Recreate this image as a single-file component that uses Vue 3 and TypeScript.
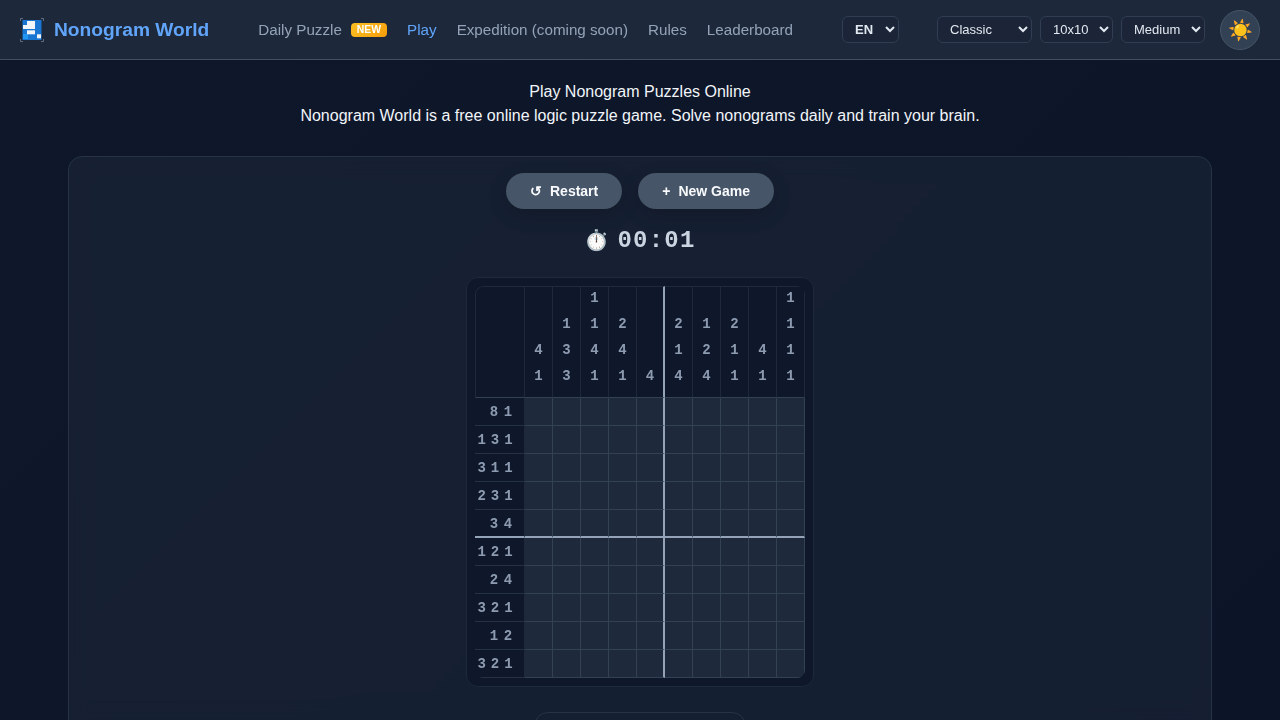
<script setup lang="ts">
const navLinks = [
  { label: 'Daily Puzzle', badge: 'NEW' },
  { label: 'Play', active: true },
  { label: 'Expedition (coming soon)' },
  { label: 'Rules' },
  { label: 'Leaderboard' },
]

// column and row hints of the current puzzle
const colClues: number[][] = [
  [4, 1], [1, 3, 3], [1, 1, 4, 1], [2, 4, 1], [4],
  [2, 1, 4], [1, 2, 4], [2, 1, 1], [4, 1], [1, 1, 1, 1],
]
const rowClues: number[][] = [
  [8, 1], [1, 3, 1], [3, 1, 1], [2, 3, 1], [3, 4],
  [1, 2, 1], [2, 4], [3, 2, 1], [1, 2], [3, 2, 1],
]
const logoCells = [
  [7, 3], [11, 3],
  [3, 7], [7, 7], [11, 7],
  [7, 12.3], [11, 12.3],
  [17, 16.3],
]
</script>

<template>
  <div class="page">
    <header class="topbar">
      <a class="brand">
        <svg class="brand-icon" viewBox="0 0 24 24" width="24" height="24">
          <rect x="2.5" y="2" width="19" height="20" fill="#1976d2" />
          <rect x="3" y="16" width="5" height="5" fill="#2196f3" />
          <rect v-for="(c, i) in logoCells" :key="i" :x="c[0]" :y="c[1]" width="4" height="4" fill="#f1f5f9" />
          <path d="M0.5 3V0.5H3M21 0.5H23.5V3M23.5 21V23.5H21M3 23.5H0.5V21" fill="none" stroke="#7c8aa0" stroke-width="0.7" />
        </svg>
        <span>Nonogram World</span>
      </a>
      <nav class="nav">
        <a v-for="l in navLinks" :key="l.label" class="nav-link" :class="{ active: l.active }">
          {{ l.label }}<span v-if="l.badge" class="badge">{{ l.badge }}</span>
        </a>
      </nav>
      <select class="sel sel-lang"><option>EN</option><option>ZH</option></select>
      <div class="controls">
        <select class="sel sel-mode"><option>Classic</option><option>Color</option></select>
        <select class="sel sel-size"><option>10x10</option><option>15x15</option></select>
        <select class="sel sel-level"><option>Medium</option><option>Easy</option><option>Hard</option></select>
      </div>
      <button class="theme-btn">☀️</button>
    </header>

    <main class="main">
      <section class="intro">
        <h1>Play Nonogram Puzzles Online</h1>
        <p>Nonogram World is a free online logic puzzle game. Solve nonograms daily and train your brain.</p>
      </section>

      <section class="card">
        <div class="actions">
          <button class="btn"><span>↺</span>Restart</button>
          <button class="btn"><span>+</span>New Game</button>
        </div>
        <div class="timer"><span class="watch">⏱️</span><span class="time">00:01</span></div>

        <div class="board">
          <div class="grid">
            <div class="corner"></div>
            <div
              v-for="(clue, c) in colClues"
              :key="'c' + c"
              class="col-clue"
              :class="{ thick: c === 4 }"
            >
              <span v-for="(n, k) in clue" :key="k">{{ n }}</span>
            </div>
            <template v-for="(clue, r) in rowClues" :key="'r' + r">
              <div class="row-clue" :class="{ thick: r === 4 }">
                <span v-for="(n, k) in clue" :key="k">{{ n }}</span>
              </div>
              <div
                v-for="c in 10"
                :key="c"
                class="cell"
                :class="{ 'thick-r': c === 5, 'thick-b': r === 4 }"
              ></div>
            </template>
          </div>
        </div>

        <div class="legend"></div>
      </section>
    </main>
  </div>
</template>

<style>
html, body {
  margin: 0;
  height: 720px;
  overflow: hidden;
  background: #0f172a;
}
</style>

<style scoped>
.page {
  height: 720px;
  overflow: hidden;
  font-family: "Liberation Sans", Arial, sans-serif;
  color: #e2e8f0;
  background: linear-gradient(135deg, #0f172a 0%, #0c1428 100%);
}
.topbar {
  height: 59px;
  display: flex;
  align-items: center;
  padding: 0 20px;
  background: rgba(30, 41, 59, 0.98);
  backdrop-filter: blur(10px);
  border-bottom: 1px solid #424f63;
}
.brand {
  display: flex;
  align-items: center;
  gap: 10px;
  font-size: 19.2px;
  font-weight: 700;
  color: #60a5fa;
}
.brand-icon { display: block; }
.nav {
  display: flex;
  gap: 20px;
  margin-left: 49px;
  font-size: 15.2px;
  color: #94a3b8;
}
.nav-link { display: flex; align-items: center; white-space: nowrap; }
.nav-link.active { color: #60a5fa; }
.badge {
  margin-left: 9px;
  padding: 0 6px;
  height: 14px;
  line-height: 14px;
  border-radius: 4px;
  font-size: 10.4px;
  font-weight: 700;
  color: #fff;
  background: linear-gradient(135deg, #fbbf24, #f59e0b);
}
.sel {
  height: 27px;
  padding: 0 4px 0 8px;
  font-family: inherit;
  font-size: 13px;
  color: #e2e8f0;
  background: #1b2537;
  border: 1px solid #303d52;
  border-radius: 6px;
}
.sel-lang { width: 57px; margin-left: 49px; font-weight: 700; }
.sel-mode { width: 95px; }
.sel-size { width: 73px; }
.sel-level { width: 84px; }
.controls { display: flex; gap: 8px; margin-left: 38px; }
.theme-btn {
  width: 40px;
  height: 40px;
  margin-left: 15px;
  padding: 0;
  font-size: 20px;
  background: #334155;
  border: 1px solid #475569;
  border-radius: 50%;
}
.main { padding: 20px 68px 0; }
.intro { text-align: center; font-size: 16px; line-height: 24px; color: #f1f5f9; }
.intro h1 { margin: 0; font-size: 16px; font-weight: 400; }
.intro p { margin: 0; }
.card {
  margin-top: 28px;
  padding: 16px;
  display: flex;
  flex-direction: column;
  align-items: center;
  background: rgba(30, 41, 59, 0.5);
  backdrop-filter: blur(10px);
  border: 1px solid #263347;
  border-radius: 14px;
}
.actions { display: flex; gap: 16px; }
.btn {
  height: 36px;
  padding: 0 24px;
  display: flex;
  align-items: center;
  gap: 8px;
  font-family: inherit;
  font-size: 14px;
  font-weight: 700;
  color: #f8fafc;
  background: #475569;
  border: 0;
  border-radius: 18px;
  box-shadow: 0 6px 20px rgba(0, 0, 0, 0.2);
}
.timer {
  margin-top: 15px;
  height: 32px;
  display: flex;
  align-items: center;
  gap: 8px;
}
.watch { font-size: 20px; }
.time {
  font-family: "Liberation Mono", monospace;
  font-size: 24px;
  font-weight: 700;
  letter-spacing: 1.2px;
  color: #cbd5e1;
}
.board {
  margin-top: 21px;
  padding: 8px;
  background: #0f172a;
  border: 1px solid #1e293b;
  border-radius: 12px;
}
.grid {
  display: grid;
  grid-template-columns: 50px repeat(10, 28px);
  grid-template-rows: 112px repeat(10, 28px);
  font-family: "Liberation Mono", monospace;
  font-size: 14px;
  font-weight: 700;
  color: #8d9bb1;
  border-radius: 8px;
  overflow: hidden;
}
.corner, .col-clue, .row-clue { background: #0f172a; box-sizing: border-box; }
.corner {
  border-right: 1px solid #1e293b;
  border-bottom: 1px solid #334155;
  border-top: 1px solid #1e293b;
  border-left: 1px solid #1e293b;
  border-top-left-radius: 8px;
}
.col-clue {
  display: flex;
  flex-direction: column;
  justify-content: flex-end;
  align-items: center;
  padding-bottom: 8px;
  border-right: 1px solid #1e293b;
  border-top: 1px solid #1e293b;
  border-bottom: 1px solid #334155;
}
.col-clue span { height: 26px; line-height: 26px; }
.col-clue.thick { border-right: 2px solid #94a3b8; }
.row-clue {
  display: flex;
  justify-content: flex-end;
  align-items: center;
  padding: 1px 9px 0 0;
  border-right: 1px solid #1e293b;
  border-bottom: 1px solid #253145;
}
.row-clue span { width: 14px; text-align: center; }
.row-clue.thick { border-bottom: 2px solid #94a3b8; }
.cell {
  box-sizing: border-box;
  background: #1e293b;
  border-right: 1px solid #334155;
  border-bottom: 1px solid #334155;
}
.cell.thick-r { border-right: 2px solid #94a3b8; }
.cell.thick-b { border-bottom: 2px solid #94a3b8; }
.legend {
  flex: none;
  width: 212px;
  height: 48px;
  margin-top: 25px;
  border: 1px solid #263347;
  border-radius: 14px;
  box-sizing: border-box;
}
</style>
